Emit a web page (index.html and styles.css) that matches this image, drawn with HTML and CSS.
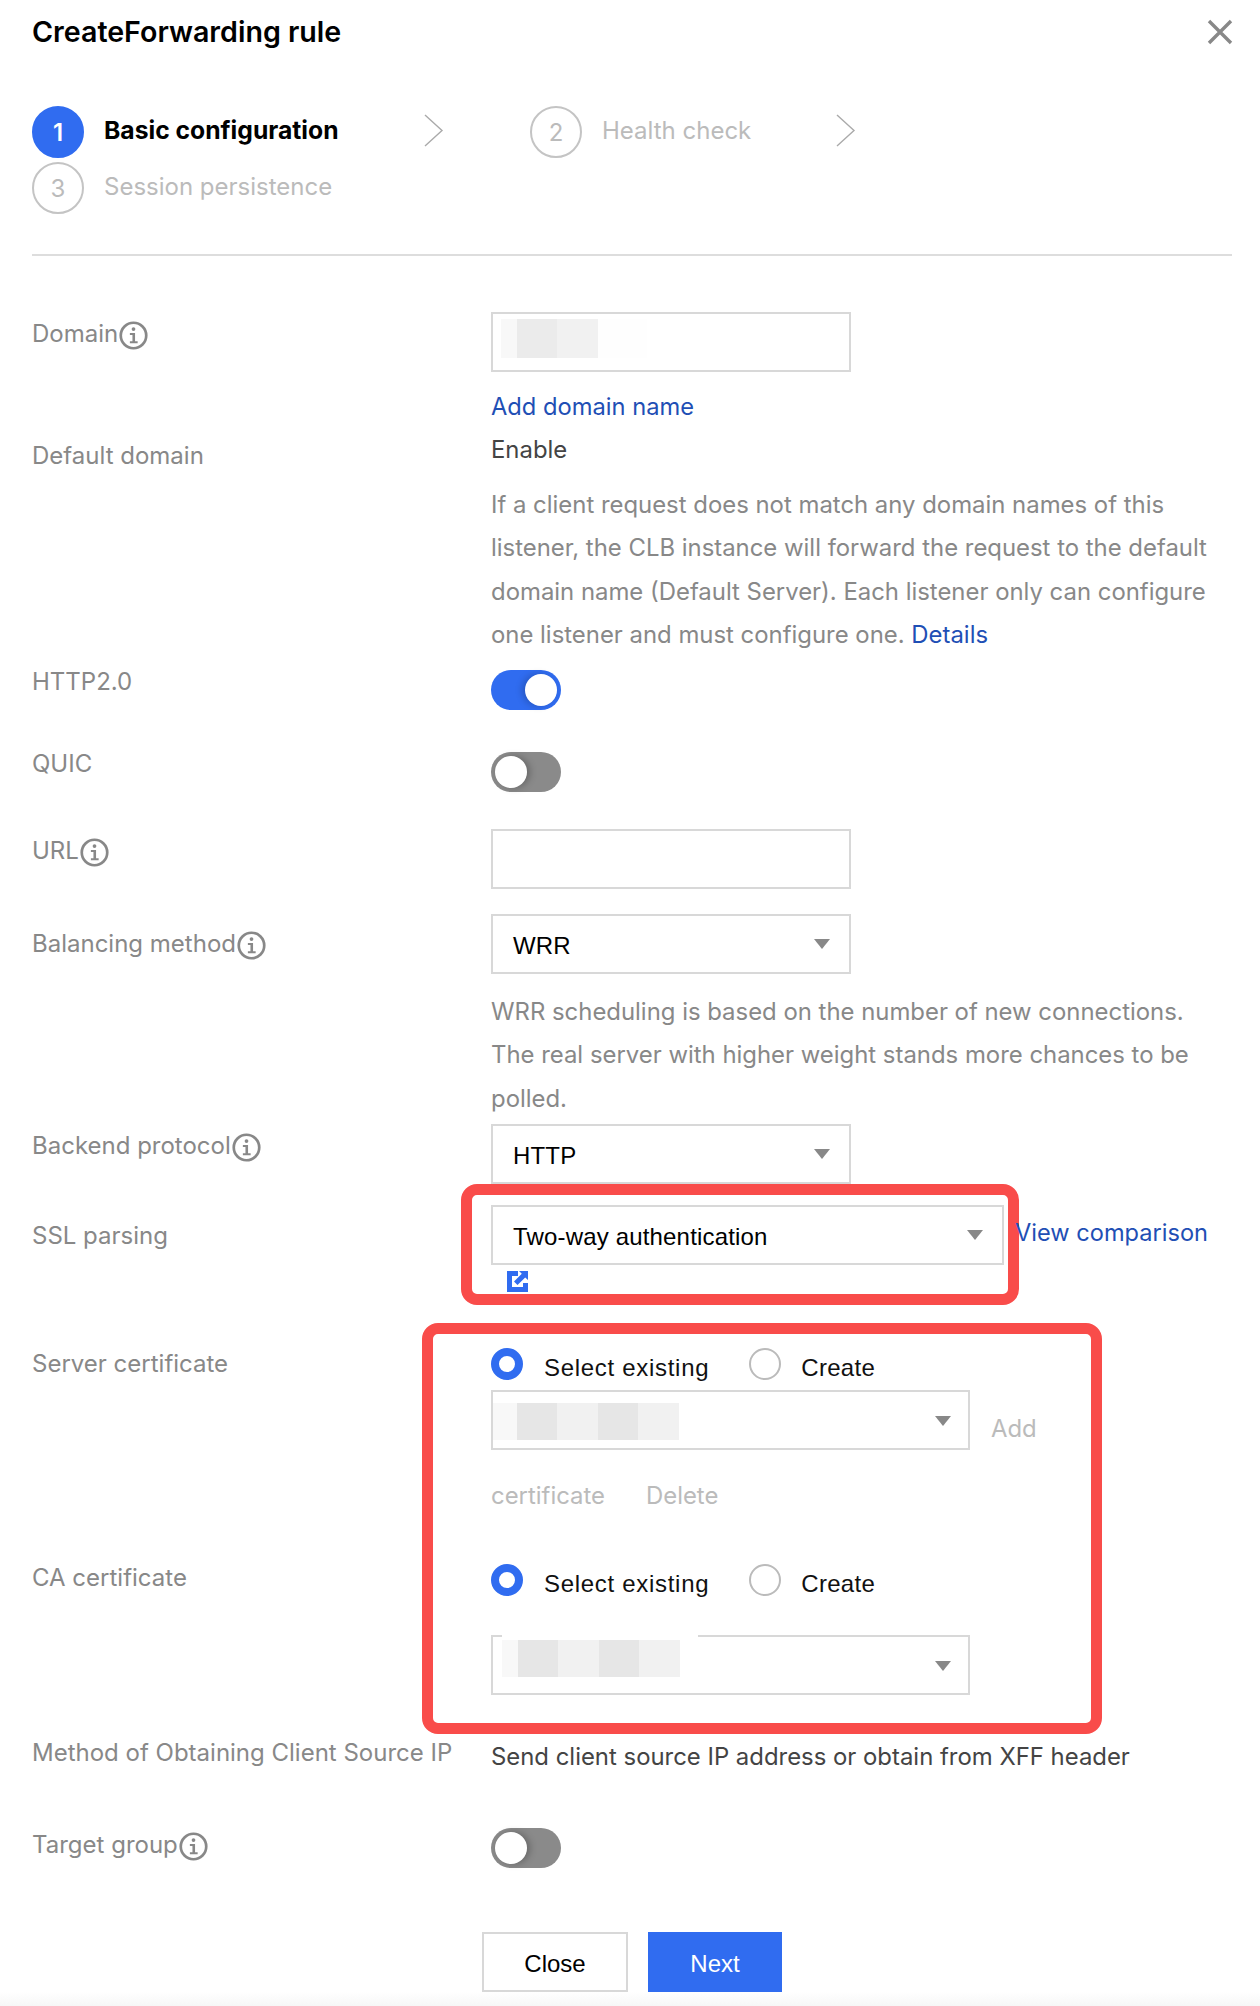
FILE: index.html
```html
<!DOCTYPE html>
<html>
<head>
    <title>Create Forwarding rule</title>
    <link rel="stylesheet" href="styles.css">
</head>
<body>
    <div class="page">
        <div class="head">
            <h1>CreateForwarding rule</h1>
            <svg class="close-icon" width="26" height="26" viewBox="0 0 26 26"><path d="M2 2L24 24M24 2L2 24" stroke="#888" stroke-width="3.4" fill="none"/></svg>
        </div>

        <div class="steps">
            <div class="step step-first">
                <span class="step-num active">1</span>
                <span class="step-text active">Basic configuration</span>
                <svg class="chevron" width="20" height="33" viewBox="0 0 20 33"><path d="M1 1L18 16.5L1 32" stroke="#aaa" stroke-width="1.4" fill="none"/></svg>
            </div>
            <div class="step step-second">
                <span class="step-num">2</span>
                <span class="step-text">Health check</span>
                <svg class="chevron" width="20" height="33" viewBox="0 0 20 33"><path d="M1 1L18 16.5L1 32" stroke="#aaa" stroke-width="1.4" fill="none"/></svg>
            </div>
            <div class="step">
                <span class="step-num">3</span>
                <span class="step-text">Session persistence</span>
            </div>
        </div>

        <div class="form">
            <div class="row row-domain">
                <div class="label">Domain<svg class="info" viewBox="0 0 28 28"><use href="#info-glyph"/></svg></div>
                <div class="field">
                    <div class="input">
                        <div class="blur blur-domain"><i class="b1"></i><i class="b2"></i><i class="b3"></i><i class="b4"></i></div>
                    </div>
                    <a class="link add-domain">Add domain name</a>
                </div>
            </div>

            <div class="row row-default">
                <div class="label label-default">Default domain</div>
                <div class="field">
                    <div class="value">Enable</div>
                    <p class="help">If a client request does not match any domain names of this listener, the CLB instance will forward the request to the default domain name (Default Server). Each listener only can configure one listener and must configure one. <a class="link">Details</a></p>
                </div>
            </div>

            <div class="row row-http">
                <div class="label label-sm">HTTP2.0</div>
                <div class="field"><span class="toggle on"></span></div>
            </div>

            <div class="row row-quic">
                <div class="label label-sm">QUIC</div>
                <div class="field"><span class="toggle"></span></div>
            </div>

            <div class="row row-url">
                <div class="label">URL<svg class="info" viewBox="0 0 28 28"><use href="#info-glyph"/></svg></div>
                <div class="field"><div class="input"></div></div>
            </div>

            <div class="row row-balance">
                <div class="label label-low">Balancing method<svg class="info" viewBox="0 0 28 28"><use href="#info-glyph"/></svg></div>
                <div class="field">
                    <div class="select">WRR</div>
                    <p class="help help-wrr">WRR scheduling is based on the number of new connections. The real server with higher weight stands more chances to be polled.</p>
                </div>
            </div>

            <div class="row row-backend">
                <div class="label">Backend protocol<svg class="info" viewBox="0 0 28 28"><use href="#info-glyph"/></svg></div>
                <div class="field"><div class="select">HTTP</div></div>
            </div>

            <div class="row row-ssl">
                <div class="label label-ssl">SSL parsing</div>
                <div class="field">
                    <div class="ssl-line">
                        <div class="select select-wide">Two-way authentication</div>
                        <a class="link view-link">View comparison</a>
                    </div>
                    <svg class="ext-icon" width="21" height="21" viewBox="0 0 21 21">
                        <path d="M0 0H11V5H5V16H16V12H21V21H0Z" fill="#306cf0"/>
                        <path d="M12 0H21V9L18.2 6.4L10.5 14L7 10.5L14.8 2.8Z" fill="#306cf0"/>
                    </svg>
                </div>
            </div>

            <div class="row row-server">
                <div class="label label-mid">Server certificate</div>
                <div class="field">
                    <div class="radios">
                        <span class="radio checked"></span><span class="radio-text">Select existing</span>
                        <span class="radio"></span><span class="radio-text radio-text-short">Create</span>
                    </div>
                    <div class="cert-line">
                        <div class="select select-cert">
                            <div class="blur blur-server"><i class="b1"></i><i class="b2"></i><i class="b3"></i><i class="b2"></i><i class="b3"></i></div>
                        </div>
                        <span class="muted add-text">Add</span>
                    </div>
                    <div class="muted cert-actions"><span>certificate</span><span>Delete</span></div>
                </div>
            </div>

            <div class="row row-ca">
                <div class="label label-ca">CA certificate</div>
                <div class="field">
                    <div class="radios">
                        <span class="radio checked"></span><span class="radio-text">Select existing</span>
                        <span class="radio"></span><span class="radio-text radio-text-short">Create</span>
                    </div>
                    <div class="select select-cert select-ca">
                        <div class="blur blur-ca"><i class="b1"></i><i class="b2"></i><i class="b3"></i><i class="b2"></i><i class="b3"></i></div>
                    </div>
                </div>
            </div>

            <div class="row row-method">
                <div class="label label-method">Method of Obtaining Client Source IP</div>
                <div class="field"><div class="value value-send">Send client source IP address or obtain from XFF header</div></div>
            </div>

            <div class="row row-target">
                <div class="label label-target">Target group<svg class="info" viewBox="0 0 28 28"><use href="#info-glyph"/></svg></div>
                <div class="field"><span class="toggle"></span></div>
            </div>
        </div>

        <div class="footer">
            <button class="btn">Close</button>
            <button class="btn btn-primary">Next</button>
        </div>

        <!-- red annotation frames on top of the form -->
        <div class="mark mark-ssl"></div>
        <div class="mark mark-cert"></div>
    </div>

    <svg width="0" height="0" class="defs">
        <defs>
            <g id="info-glyph">
                <circle cx="14" cy="14" r="12.3" fill="none" stroke="#888" stroke-width="2.6"/>
                <circle cx="14" cy="7.8" r="1.8" fill="#888"/>
                <path d="M10.5 11.5H15.5V19.5H18V21.5H10.5V19.5H13V13.5H10.5Z" fill="#888"/>
            </g>
        </defs>
    </svg>
</body>
</html>
```

FILE: styles.css
```css
* {
    box-sizing: border-box;
}
body {
    margin: 0;
    background: #fff;
    font-family: "Inter", "Liberation Sans", sans-serif;
    font-size: 24px;
    color: #888;
}
.page {
    position: relative;
    width: 1260px;
    height: 2006px;
    padding: 0 28px 0 32px;
    overflow: hidden;
}
.defs {
    position: absolute;
}

/* header */
.head {
    display: flex;
    justify-content: space-between;
    align-items: center;
    height: 64px;
}
h1 {
    margin: 0 0 1px;
    font-size: 28.6px;
    font-weight: 600;
    color: #000;
}
.close-icon {
    margin: -1px -1px 0 0;
}

/* steps */
.steps {
    display: flex;
    flex-wrap: wrap;
    align-content: flex-start;
    width: 860px;
    height: 148px;
    margin-top: 42px;
}
.step {
    display: flex;
    align-items: center;
    height: 56px;
}
.step-first {
    width: 498px;
}
.step-second {
    width: 340px;
}
.step-num {
    display: flex;
    align-items: center;
    justify-content: center;
    flex: none;
    width: 52px;
    height: 52px;
    margin-bottom: 4px;
    border: 2px solid #c4c4c4;
    border-radius: 50%;
    color: #bbb;
}
.step-num.active {
    background: #306cf0;
    border-color: #306cf0;
    color: #fff;
    font-weight: 600;
}
.step-text {
    margin: 0 0 8px 20px;
    color: #bbb;
}
.step-text.active {
    font-size: 24.7px;
    font-weight: 700;
    color: #000;
}
.step-first .step-text {
    width: 320px;
}
.step-second .step-text {
    width: 234px;
}
.chevron {
    margin-bottom: 8px;
}

/* form */
.form {
    border-top: 2px solid #ddd;
}
.row {
    display: grid;
    grid-template-columns: 460px 1fr;
}
.row-domain { margin-top: 56px; height: 120px; }
.row-default { height: 238px; }
.row-http { height: 82px; }
.row-quic { height: 77px; }
.row-url { height: 85px; }
.row-balance { height: 210px; }
.row-backend { height: 81px; }
.row-ssl { height: 143px; }
.row-server { height: 216px; }
.row-ca { height: 174px; }
.row-method { height: 90px; }
.row-target { height: 104px; }

.label {
    display: flex;
    align-items: flex-start;
    padding-top: 5px;
    line-height: 34px;
    white-space: nowrap;
}
.label-default { padding-top: 7px; }
.label-sm { padding-top: 0; line-height: 24px; }
.label-low { padding-top: 13px; }
.label-ssl { padding-top: 14px; }
.label-mid { padding-top: 0; margin-top: -1px; }
.label-ca { padding-top: 0; margin-top: -3px; }
.label-method { padding-top: 0; margin-top: -2px; }
.label-target { padding-top: 0; }
.info {
    width: 29px;
    height: 29px;
    margin: 4px 0 0 1px;
    flex: none;
}
.field {
    margin-left: -1px;
    font-size: 23.9px;
}
.value {
    padding-top: 1px;
    line-height: 34px;
    color: #444;
}
.value-send {
    padding-top: 2px;
}
.help {
    margin: 16px 0 0;
    line-height: 43.4px;
    width: 724px;
}
.help-wrr {
    margin-top: 16px;
}
.link {
    color: #1f4fb5;
}
.add-domain {
    display: block;
    margin-top: 18px;
    line-height: 34px;
    font-size: 23.7px;
}

/* controls */
.input, .select {
    position: relative;
    width: 360px;
    height: 60px;
    border: 2px solid #d8d8d8;
    background: #fff;
}
.select {
    display: flex;
    align-items: center;
    padding: 4px 0 0 20px;
    font-family: "Liberation Sans", sans-serif;
    font-size: 24px;
    letter-spacing: 0.17px;
    color: #000;
}
.select::after {
    content: "";
    position: absolute;
    right: 19px;
    top: 23px;
    border-left: 8px solid transparent;
    border-right: 8px solid transparent;
    border-top: 10px solid #888;
}
.select-wide {
    width: 513px;
    flex: none;
}
.select-cert {
    width: 479px;
    flex: none;
}
.select-cert::after {
    right: 17px;
    top: 24px;
}
.select-ca {
    margin-top: 39px;
}
.toggle {
    position: relative;
    display: block;
    width: 70px;
    height: 40px;
    border-radius: 20px;
    background: #8a8a8a;
}
.toggle::after {
    content: "";
    position: absolute;
    left: 4px;
    top: 4px;
    width: 32px;
    height: 32px;
    border-radius: 50%;
    background: #fff;
    box-shadow: 3px 0 7px rgba(0, 0, 0, 0.25);
}
.toggle.on {
    background: #306cf0;
}
.toggle.on::after {
    left: 34px;
    box-shadow: -3px 0 7px rgba(0, 0, 0, 0.2);
}
.ssl-line {
    display: flex;
}
.view-link {
    position: relative;
    z-index: 2;
    margin: 11px 0 0 11px;
    font-size: 23.6px;
    line-height: 34px;
    white-space: nowrap;
}
.ext-icon {
    display: block;
    margin: 6px 0 0 16px;
}
.radios {
    display: flex;
    align-items: flex-start;
    height: 32px;
}
.radio {
    flex: none;
    width: 32px;
    height: 32px;
    border: 2px solid #bbb;
    border-radius: 50%;
}
.radio.checked {
    border: 8px solid #306cf0;
}
.radio-text {
    margin: 5px 40px 0 21px;
    line-height: 30px;
    font-family: "Liberation Sans", sans-serif;
    font-size: 24px;
    letter-spacing: 0.7px;
    color: #111;
}
.radio-text-short {
    margin-left: 20px;
    letter-spacing: 0.3px;
}
.cert-line {
    display: flex;
    margin-top: 10px;
}
.muted {
    color: #bbb;
}
.add-text {
    margin: 22px 0 0 21px;
    line-height: 34px;
}
.cert-actions {
    display: flex;
    gap: 41px;
    margin-top: 29px;
    line-height: 34px;
}

/* blurred out values */
.blur {
    position: absolute;
    display: flex;
}
.blur i {
    display: block;
    height: 100%;
}
.blur .b1 { width: 16px; background: #f8f8f8; }
.blur .b2 { width: 40px; background: #e6e6e6; }
.blur .b3 { width: 41px; background: #f1f1f1; }
.blur .b4 { width: 49px; background: #fefefe; }
.blur-domain {
    left: 8px;
    top: 5px;
    height: 39px;
}
.blur-domain .b2 { background: #ebebeb; }
.blur-server {
    left: 0;
    top: 11px;
    height: 37px;
}
.blur-server .b1 { width: 24px; }
.blur-ca {
    left: 9px;
    top: -4px;
    height: 44px;
    padding: 0 18px 0 0;
    background: #fff;
}
.blur-ca i {
    margin-top: 7px;
    height: 37px;
}

/* footer */
.footer {
    position: absolute;
    left: 0;
    right: 0;
    bottom: 0;
    display: flex;
    justify-content: center;
    gap: 20px;
    height: 74px;
    padding-left: 4px;
    background: linear-gradient(#fff 80%, #f7f7f7);
}
.btn {
    width: 146px;
    height: 60px;
    padding-top: 5px;
    border: 2px solid #d8d8d8;
    background: #fff;
    font-family: "Liberation Sans", sans-serif;
    font-size: 24px;
    color: #000;
}
.btn-primary {
    width: 134px;
    border: 0;
    background: #306cf0;
    color: #fff;
}

/* annotation frames */
.mark {
    position: absolute;
    border: 11px solid #f94c4a;
    border-radius: 16px;
}
.mark-ssl {
    left: 461px;
    top: 1184px;
    width: 558px;
    height: 121px;
}
.mark-cert {
    left: 422px;
    top: 1323px;
    width: 680px;
    height: 411px;
}
```
